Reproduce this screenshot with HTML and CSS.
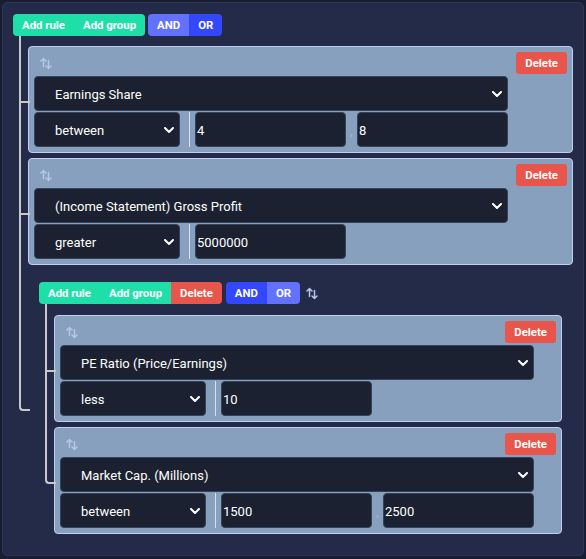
FILE: index.html
```html
<!DOCTYPE html>
<html>
<head>
<meta charset="utf-8">
<link rel="stylesheet" href="styles.css">
</head>
<body>
<div class="panel">
  <div class="toolbar">
    <div class="btn-group">
      <button class="btn green">Add rule</button>
      <button class="btn green">Add group</button>
    </div>
    <div class="btn-group">
      <button class="btn blue-light">AND</button>
      <button class="btn blue-dark">OR</button>
    </div>
  </div>
  <div class="body">
    <div class="node rule">
      <div class="rule-head">
        <svg class="handle" viewBox="0 0 12 13" width="12" height="13"><path d="M3.5 9.5V1.5M1 4L3.5 1.5L6 4M8.5 3.5V11.5M6 9L8.5 11.5L11 9" fill="none" stroke="currentColor" stroke-width="1.5" stroke-linecap="round" stroke-linejoin="round"/></svg>
        <button class="btn red">Delete</button>
      </div>
      <div class="select field"><span>Earnings Share</span><svg class="chev" viewBox="0 0 10 6" width="10" height="6"><path d="M1 1L5 5L9 1" fill="none" stroke="#fff" stroke-width="2" stroke-linecap="round" stroke-linejoin="round"/></svg></div>
      <div class="row">
        <div class="select op"><span>between</span><svg class="chev" viewBox="0 0 10 6" width="10" height="6"><path d="M1 1L5 5L9 1" fill="none" stroke="#fff" stroke-width="2" stroke-linecap="round" stroke-linejoin="round"/></svg></div>
        <div class="sep"></div>
        <div class="input">4</div>
        <div class="comma">,</div>
        <div class="input">8</div>
      </div>
    </div>
    <div class="node rule">
      <div class="rule-head">
        <svg class="handle" viewBox="0 0 12 13" width="12" height="13"><path d="M3.5 9.5V1.5M1 4L3.5 1.5L6 4M8.5 3.5V11.5M6 9L8.5 11.5L11 9" fill="none" stroke="currentColor" stroke-width="1.5" stroke-linecap="round" stroke-linejoin="round"/></svg>
        <button class="btn red">Delete</button>
      </div>
      <div class="select field"><span>(Income Statement) Gross Profit</span><svg class="chev" viewBox="0 0 10 6" width="10" height="6"><path d="M1 1L5 5L9 1" fill="none" stroke="#fff" stroke-width="2" stroke-linecap="round" stroke-linejoin="round"/></svg></div>
      <div class="row">
        <div class="select op"><span>greater</span><svg class="chev" viewBox="0 0 10 6" width="10" height="6"><path d="M1 1L5 5L9 1" fill="none" stroke="#fff" stroke-width="2" stroke-linecap="round" stroke-linejoin="round"/></svg></div>
        <div class="sep"></div>
        <div class="input">5000000</div>
      </div>
    </div>
    <div class="node group">
      <div class="toolbar">
        <div class="btn-group">
          <button class="btn green">Add rule</button>
          <button class="btn green">Add group</button>
          <button class="btn red">Delete</button>
        </div>
        <div class="btn-group">
          <button class="btn blue-dark">AND</button>
          <button class="btn blue-light">OR</button>
        </div>
        <svg class="handle group-handle" viewBox="0 0 12 13" width="12" height="13"><path d="M3.5 9.5V1.5M1 4L3.5 1.5L6 4M8.5 3.5V11.5M6 9L8.5 11.5L11 9" fill="none" stroke="currentColor" stroke-width="1.5" stroke-linecap="round" stroke-linejoin="round"/></svg>
      </div>
      <div class="body nested-body">
        <div class="node rule">
          <div class="rule-head">
            <svg class="handle" viewBox="0 0 12 13" width="12" height="13"><path d="M3.5 9.5V1.5M1 4L3.5 1.5L6 4M8.5 3.5V11.5M6 9L8.5 11.5L11 9" fill="none" stroke="currentColor" stroke-width="1.5" stroke-linecap="round" stroke-linejoin="round"/></svg>
            <button class="btn red">Delete</button>
          </div>
          <div class="select field"><span>PE Ratio (Price/Earnings)</span><svg class="chev" viewBox="0 0 10 6" width="10" height="6"><path d="M1 1L5 5L9 1" fill="none" stroke="#fff" stroke-width="2" stroke-linecap="round" stroke-linejoin="round"/></svg></div>
          <div class="row">
            <div class="select op"><span>less</span><svg class="chev" viewBox="0 0 10 6" width="10" height="6"><path d="M1 1L5 5L9 1" fill="none" stroke="#fff" stroke-width="2" stroke-linecap="round" stroke-linejoin="round"/></svg></div>
            <div class="sep"></div>
            <div class="input">10</div>
          </div>
        </div>
        <div class="node rule">
          <div class="rule-head">
            <svg class="handle" viewBox="0 0 12 13" width="12" height="13"><path d="M3.5 9.5V1.5M1 4L3.5 1.5L6 4M8.5 3.5V11.5M6 9L8.5 11.5L11 9" fill="none" stroke="currentColor" stroke-width="1.5" stroke-linecap="round" stroke-linejoin="round"/></svg>
            <button class="btn red">Delete</button>
          </div>
          <div class="select field"><span>Market Cap. (Millions)</span><svg class="chev" viewBox="0 0 10 6" width="10" height="6"><path d="M1 1L5 5L9 1" fill="none" stroke="#fff" stroke-width="2" stroke-linecap="round" stroke-linejoin="round"/></svg></div>
          <div class="row">
            <div class="select op"><span>between</span><svg class="chev" viewBox="0 0 10 6" width="10" height="6"><path d="M1 1L5 5L9 1" fill="none" stroke="#fff" stroke-width="2" stroke-linecap="round" stroke-linejoin="round"/></svg></div>
            <div class="sep"></div>
            <div class="input">1500</div>
            <div class="comma">,</div>
            <div class="input">2500</div>
          </div>
        </div>
      </div>
    </div>
  </div>
</div>
</body>
</html>
```

FILE: styles.css
```css
* { box-sizing: border-box; }

html, body {
  margin: 0;
  padding: 0;
}

body {
  background: #181d2f;
  font-family: Roboto, "Liberation Sans", Arial, sans-serif;
  color: #fff;
  height: 559px;
  overflow: hidden;
}

.panel {
  margin: 2px;
  background: #232b48;
  border: 1px solid #2d3656;
  border-radius: 5px;
  padding: 11px 10px 10px 10px;
}

.toolbar {
  display: flex;
  align-items: center;
  gap: 3px;
  height: 22px;
}

.btn-group {
  display: flex;
  border-radius: 4px;
  overflow: hidden;
}

.btn {
  border: 0;
  margin: 0;
  height: 22px;
  padding: 0 9px;
  font-family: Roboto, "Liberation Sans", Arial, sans-serif;
  font-weight: 700;
  font-size: 11.4px;
  color: #fff;
  cursor: pointer;
}

.green { background: #1fdfa9; }
.red { background: #e8554b; }
.blue-light { background: #6272ff; }
.blue-dark { background: #3347ff; }

.rule-head .red { border-radius: 3px; }

.body {
  margin-top: 10px;
  margin-left: 15px;
  display: flex;
  flex-direction: column;
  gap: 5px;
}

.nested-body { margin-top: 11px; }

.node { position: relative; }

.node::before {
  content: "";
  position: absolute;
  left: -10px;
  top: -11px;
  width: 9px;
  height: calc(50% + 12px);
  border-left: 2px solid #c8c8c8;
  border-bottom: 2px solid #c8c8c8;
}

.nested-body > .node::before {
  top: -12px;
  height: calc(50% + 13px);
}

.node::after {
  content: "";
  position: absolute;
  left: -10px;
  top: 50%;
  bottom: -2px;
  border-left: 2px solid #c8c8c8;
}

.node:last-child::before { border-bottom-left-radius: 4px; }
.node:last-child::after { display: none; }

.group {
  border: 1px solid transparent;
  padding: 11px 10px 10px 10px;
}

.group .toolbar { gap: 4px; }

.group-handle {
  margin-left: 2px;
  color: #b4c8f4;
}

.rule {
  background: #87a0be;
  border: 1px solid #c6cdf4;
  border-radius: 4px;
  padding: 5px;
}

.rule-head {
  display: flex;
  align-items: center;
  justify-content: space-between;
  height: 22px;
  margin-bottom: 2px;
}

.handle {
  display: block;
  color: #b8c6e6;
}

.rule-head .handle { margin-left: 6px; }

.select {
  height: 35px;
  background: #1b2130;
  border: 1px solid #34425c;
  border-radius: 4px;
  display: flex;
  align-items: center;
  justify-content: space-between;
  padding: 1px 5px 0 20px;
  font-size: 13px;
  color: #fff;
}

.field { width: 474px; }
.op { width: 146px; }

.chev { display: block; }

.row {
  display: flex;
  height: 35px;
  margin-top: 1px;
}

.sep {
  width: 1px;
  background: #d9e0f0;
  margin: 0 5px 0 9px;
}

.input {
  width: 151px;
  height: 35px;
  background: #1b2130;
  border: 1px solid #34425c;
  border-radius: 4px;
  padding: 1px 0 0 1px;
  display: flex;
  align-items: center;
  font-size: 13px;
  color: #fff;
}

.comma {
  width: 11px;
  display: flex;
  justify-content: center;
  align-items: center;
  padding-top: 3px;
  font-size: 12px;
  color: #a9b7d6;
}
```
